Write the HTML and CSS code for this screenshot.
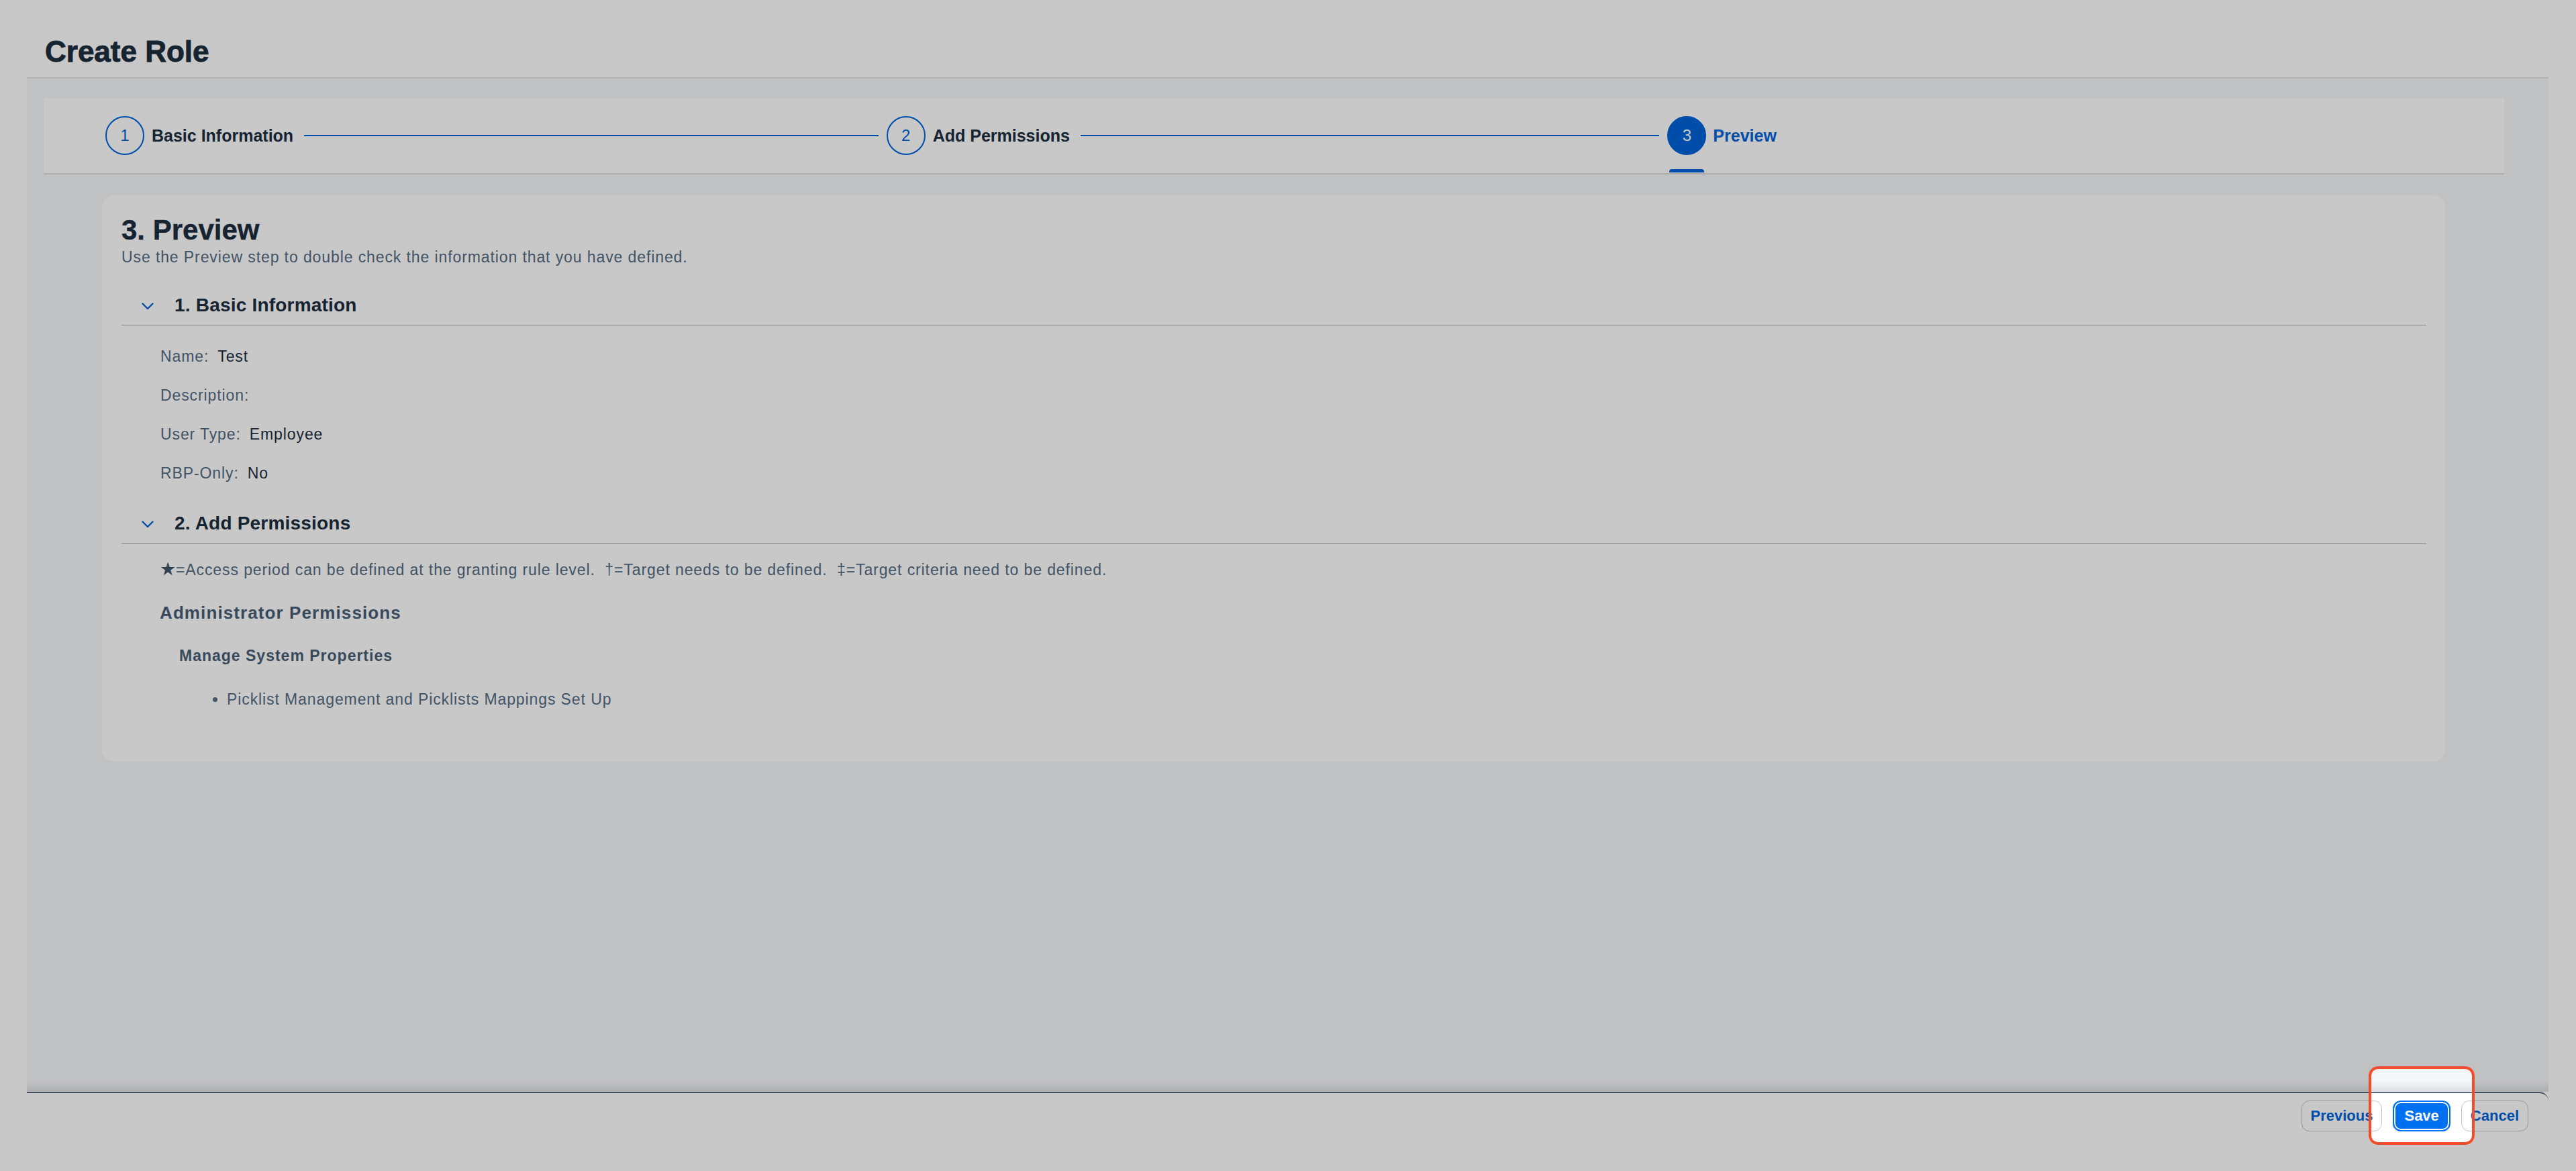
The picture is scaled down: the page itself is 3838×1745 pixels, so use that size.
FILE: index.html
```html
<!DOCTYPE html>
<html lang="en">
<head>
<meta charset="utf-8">
<title>Create Role</title>
<link rel="stylesheet" href="styles.css">
</head>
<body>
<div class="page">
  <div class="dialog">
    <header class="dlg-header">
      <h1 class="dlg-title">Create Role</h1>
    </header>

    <div class="dlg-content">
      <nav class="stepper">
        <div class="step">
          <span class="step-num">1</span>
          <span class="step-label">Basic Information</span>
          <span class="step-line"></span>
        </div>
        <div class="step">
          <span class="step-num">2</span>
          <span class="step-label">Add Permissions</span>
          <span class="step-line"></span>
        </div>
        <div class="step current">
          <span class="step-num">3<span class="step-marker"></span></span>
          <span class="step-label">Preview</span>
        </div>
      </nav>

      <section class="card">
        <h2 class="card-title">3. Preview</h2>
        <p class="card-sub">Use the Preview step to double check the information that you have defined.</p>

        <div class="group">
          <div class="group-head">
            <svg class="chev" width="18" height="11" viewBox="0 0 18 11"><path d="M1.5 1.5 L9 9 L16.5 1.5" fill="none" stroke="#0064d9" stroke-width="2.4" stroke-linecap="round" stroke-linejoin="round"/></svg>
            <h3 class="group-title">1. Basic Information</h3>
          </div>
          <div class="rows">
            <div class="row"><span class="lbl">Name:</span><span class="val">Test</span></div>
            <div class="row"><span class="lbl">Description:</span><span class="val"></span></div>
            <div class="row"><span class="lbl">User Type:</span><span class="val">Employee</span></div>
            <div class="row"><span class="lbl">RBP-Only:</span><span class="val">No</span></div>
          </div>
        </div>

        <div class="group group-perms">
          <div class="group-head">
            <svg class="chev" width="18" height="11" viewBox="0 0 18 11"><path d="M1.5 1.5 L9 9 L16.5 1.5" fill="none" stroke="#0064d9" stroke-width="2.4" stroke-linecap="round" stroke-linejoin="round"/></svg>
            <h3 class="group-title">2. Add Permissions</h3>
          </div>
          <p class="legend"><span class="sym-star">★</span>=Access period can be defined at the granting rule level.&nbsp; †=Target needs to be defined.&nbsp; ‡=Target criteria need to be defined.</p>
          <h4 class="perm-cat">Administrator Permissions</h4>
          <h5 class="perm-group">Manage System Properties</h5>
          <ul class="perm-list">
            <li>Picklist Management and Picklists Mappings Set Up</li>
          </ul>
        </div>
      </section>
    </div>

    <footer class="dlg-footer">
      <button class="btn">Previous</button>
      <button class="btn btn-emph">Save</button>
      <button class="btn">Cancel</button>
    </footer>
  </div>

  <div class="spotlight"></div>
</div>
</body>
</html>
```

FILE: styles.css
```css
* { box-sizing: border-box; }

html, body {
  margin: 0;
  padding: 0;
  background: #ffffff;
}

body {
  font-family: "Liberation Sans", Arial, sans-serif;
  color: #1d2d3e;
}

.page {
  position: relative;
  width: 3838px;
  height: 1745px;
  overflow: hidden;
  background: #ffffff;
}

/* ---------- dialog shell ---------- */
.dialog {
  margin-left: 40px;
  width: 3757px;
  height: 1697px;
  display: flex;
  flex-direction: column;
  background: #ffffff;
}

.dlg-header {
  height: 117px;
  padding: 51px 0 0 27px;
  border-bottom: 2px solid #e5e5e5;
  background: #ffffff;
}

.dlg-title {
  margin: 0;
  font-size: 44px;
  line-height: 52px;
  font-weight: 700;
  -webkit-text-stroke: 0.9px #1d2d3e;
  color: #1d2d3e;
}

.dlg-content {
  flex: 1;
  background: #f5f6f8;
  padding: 29px 66px 0 25px;
}

/* ---------- wizard stepper ---------- */
.stepper {
  display: flex;
  align-items: center;
  height: 114px;
  padding: 0 83px 0 92px;
  background: #ffffff;
  border-bottom: 2px solid #dcdcdc;
}

.step {
  flex: 1;
  display: flex;
  align-items: center;
}

.step-num {
  position: relative;
  flex: none;
  width: 58px;
  height: 58px;
  border: 2px solid #0064d9;
  border-radius: 50%;
  display: flex;
  align-items: center;
  justify-content: center;
  font-size: 24px;
  color: #0064d9;
}

.step-label {
  margin-left: 11px;
  font-size: 25px;
  line-height: 30px;
  font-weight: 700;
  color: #1d2d3e;
  white-space: nowrap;
}

.step-line {
  flex: 1;
  height: 2px;
  margin: 0 12px 0 16px;
  background: #0064d9;
}

.step.current .step-num {
  background: #0064d9;
  color: #ffffff;
}

.step.current .step-label {
  color: #0064d9;
  margin-left: 10px;
}

.step-marker {
  position: absolute;
  left: 1px;
  right: 1px;
  top: 77px;
  height: 5px;
  border-radius: 4px 4px 0 0;
  background: #0064d9;
}

/* ---------- preview card ---------- */
.card {
  margin: 31px 88px 0 87px;
  padding: 27px 28px 75px 29px;
  background: #ffffff;
  border-radius: 18px;
}

.card-title {
  margin: 0;
  font-size: 42px;
  line-height: 50px;
  font-weight: 700;
  -webkit-text-stroke: 0.4px #1d2d3e;
  color: #1d2d3e;
}

.card-sub {
  margin: 1px 0 0;
  font-size: 23px;
  line-height: 28px;
  letter-spacing: 0.9px;
  color: #556b82;
}

.group-head {
  display: flex;
  align-items: center;
  margin-top: 38px;
  padding: 0 0 9px 30px;
  border-bottom: 1px solid #aab1b9;
}

.group-perms .group-head {
  margin-top: 26px;
}

.chev {
  flex: none;
  margin-right: 31px;
  margin-top: 2px;
}

.group-title {
  margin: 0;
  font-size: 28px;
  line-height: 40px;
  font-weight: 700;
  letter-spacing: 0.2px;
  color: #1d2d3e;
}

.rows {
  padding: 17px 0 0 58px;
}

.row {
  font-size: 23px;
  line-height: 58px;
  letter-spacing: 0.9px;
}

.lbl {
  color: #556b82;
  margin-right: 13px;
}

.val {
  color: #1d2d3e;
}

.legend {
  margin: 18px 0 0 57px;
  font-size: 23px;
  line-height: 40px;
  letter-spacing: 0.9px;
  color: #556b82;
}

.sym-star {
  font-size: 27px;
  letter-spacing: 0;
  color: #3f5368;
}

.perm-cat {
  margin: 24px 0 0 57px;
  font-size: 26px;
  line-height: 40px;
  font-weight: 700;
  letter-spacing: 1.1px;
  color: #475e75;
}

.perm-group {
  margin: 26px 0 0 86px;
  font-size: 23px;
  line-height: 36px;
  font-weight: 700;
  letter-spacing: 1px;
  color: #475e75;
}

.perm-list {
  margin: 29px 0 0;
  padding-left: 157px;
  font-size: 23px;
  line-height: 36px;
  letter-spacing: 0.9px;
  color: #556b82;
}

/* ---------- footer toolbar ---------- */
.dlg-footer {
  position: relative;
  height: 70px;
  display: flex;
  align-items: center;
  justify-content: flex-end;
  gap: 16px;
  padding: 0 30px 0 0;
  background: #ffffff;
  border-top: 2px solid #5b6876;
  border-top-right-radius: 14px;
  border-bottom-right-radius: 14px;
}

/* soft shade cast upward onto the content area */
.dlg-footer::before {
  content: "";
  position: absolute;
  left: 0;
  right: 0;
  top: -18px;
  height: 16px;
  background: linear-gradient(to bottom, rgba(34, 53, 72, 0), rgba(34, 53, 72, 0.12));
  pointer-events: none;
}

.btn {
  height: 46px;
  padding: 0 13px;
  font-family: "Liberation Sans", Arial, sans-serif;
  font-size: 22px;
  font-weight: 700;
  color: #0064d9;
  background: #ffffff;
  border: 1px solid #bcc3ca;
  border-radius: 12px;
}

.btn-emph {
  padding: 0 15px;
  color: #ffffff;
  background: #0070f2;
  border: 2px solid #0070f2;
  box-shadow: inset 0 0 0 2px #ffffff;
}

/* ---------- guided-tour spotlight ---------- */
.spotlight {
  position: absolute;
  left: 3529px;
  top: 1589px;
  width: 158px;
  height: 117px;
  border: 4px solid #f24d2b;
  border-radius: 14px;
  box-shadow: 0 0 0 4000px rgba(0, 0, 0, 0.216);
  pointer-events: none;
}
```
